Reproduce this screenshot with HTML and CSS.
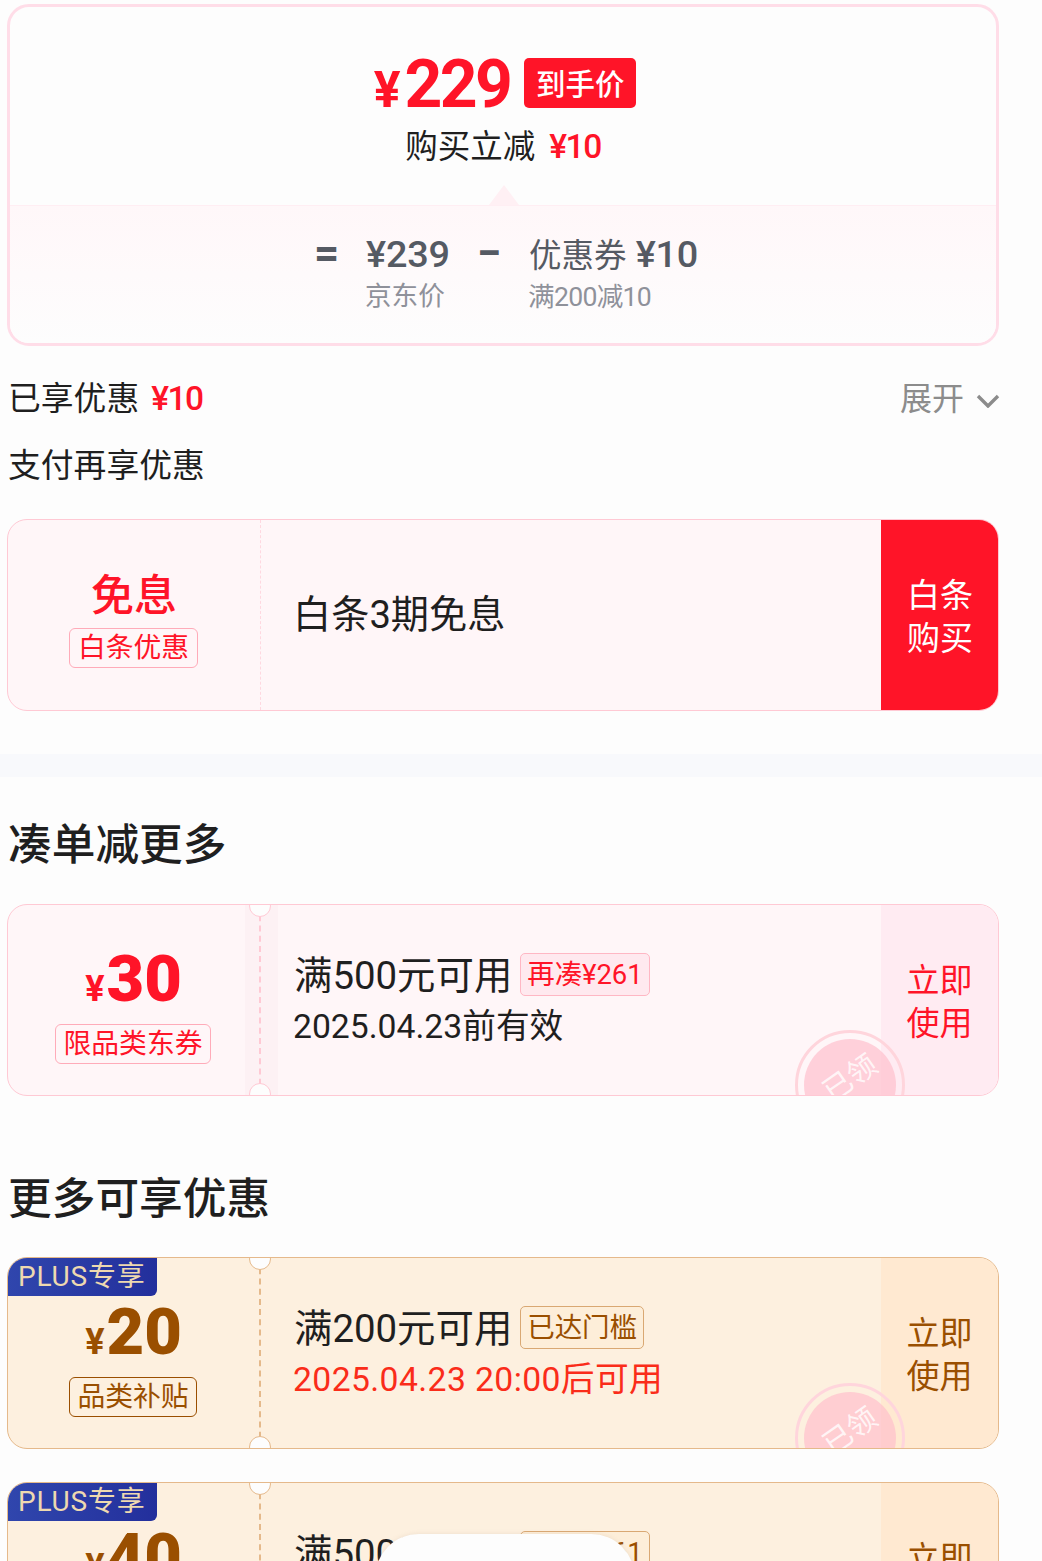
FILE: index.html
```html
<!DOCTYPE html>
<html lang="zh-CN">
<head>
<meta charset="utf-8">
<title>优惠明细</title>
<link rel="stylesheet" href="styles.css">
</head>
<body>
<main class="page">
  <section class="block">
    <div class="summary">
      <div class="summary-top">
        <div class="final">
          <span class="final-yen">¥</span><span class="final-num">229</span>
          <span class="final-tag">到手价</span>
        </div>
        <div class="final-sub">购买立减<span class="red-num">¥10</span></div>
        <i class="arrow"></i>
      </div>
      <div class="summary-bottom">
        <span class="op">=</span>
        <div class="term term-a"><b>¥239</b><small>京东价</small></div>
        <span class="op op-minus">−</span>
        <div class="term"><b><span class="cjk">优惠券</span> ¥10</b><small>满200减10</small></div>
      </div>
    </div>

    <div class="enjoyed">
      <div class="line-text">已享优惠<span class="red-num">¥10</span></div>
      <div class="expand">展开
        <svg class="chev" viewBox="0 0 24 14" width="24" height="14"><path d="M2 2l10 10L22 2" fill="none" stroke="#8c8c8c" stroke-width="3.4"/></svg>
      </div>
    </div>
    <div class="line-text pay-title">支付再享优惠</div>

    <article class="coupon pink baitiao">
      <div class="c-left">
        <div class="free">免息</div>
        <div class="c-tag">白条优惠</div>
      </div>
      <div class="c-mid"><div class="bt-title">白条3期免息</div></div>
      <div class="c-act solid">白条<br>购买</div>
    </article>
  </section>

  <div class="band"></div>

  <section class="block">
    <h2 class="head head-first">凑单减更多</h2>
    <article class="coupon pink ticket">
      <i class="strip"></i><i class="notch top"></i><i class="notch bot"></i>
      <div class="c-left">
        <div class="amount"><span class="yen">¥</span><span class="num">30</span></div>
        <div class="c-tag">限品类东券</div>
      </div>
      <div class="c-mid">
        <div class="rule">满500元可用<span class="rule-tag">再凑¥261</span></div>
        <div class="date">2025.04.23前有效</div>
      </div>
      <div class="c-act">立即<br>使用</div>
      <div class="stamp"><span>已领</span></div>
    </article>

    <h2 class="head head-second">更多可享优惠</h2>
    <article class="coupon gold ticket">
      <i class="notch top"></i><i class="notch bot"></i>
      <div class="plus">PLUS专享</div>
      <div class="c-left">
        <div class="amount"><span class="yen">¥</span><span class="num">20</span></div>
        <div class="c-tag">品类补贴</div>
      </div>
      <div class="c-mid">
        <div class="rule">满200元可用<span class="rule-tag">已达门槛</span></div>
        <div class="date date-red">2025.04.23 20:00后可用</div>
      </div>
      <div class="c-act">立即<br>使用</div>
      <div class="stamp"><span>已领</span></div>
    </article>

    <article class="coupon gold ticket last">
      <i class="notch top"></i><i class="notch bot"></i>
      <div class="plus">PLUS专享</div>
      <div class="c-left">
        <div class="amount"><span class="yen">¥</span><span class="num">40</span></div>
        <div class="c-tag">品类补贴</div>
      </div>
      <div class="c-mid">
        <div class="rule">满500元可用<span class="rule-tag">再凑¥261</span></div>
        <div class="date">2025.04.23前有效</div>
      </div>
      <div class="c-act">立即<br>使用</div>
    </article>
  </section>
  <div class="sheet"></div>
</main>
</body>
</html>
```

FILE: styles.css
```css
* { box-sizing: border-box; }
html, body { margin: 0; height: 1561px; overflow: hidden; background: #fdfdfd; }
body { font-family: Roboto, "Noto Sans CJK SC", sans-serif; color: #1f1f1f; }
.page { position: relative; height: 1561px; overflow: hidden; padding-top: 4px; }
.block { padding: 0 43px 0 7px; }

.summary { height: 342px; border: 3px solid #ffdde8; border-radius: 22px; overflow: hidden; background: #fdfdfd; display: flex; flex-direction: column; }
.summary-top { position: relative; height: 198px; display: flex; flex-direction: column; align-items: center; }
.final { display: flex; align-items: baseline; height: 60px; margin-top: 47px; color: #ff1428; line-height: 62px; font-weight: 700; margin-left: 4px; }
.final-yen { font-size: 50px; }
.final-num { font-size: 66px; letter-spacing: -2.6px; margin-left: 4px; }
.final-tag { align-self: center; margin-left: 14px; width: 112px; height: 50px; line-height: 54px; text-align: center; border-radius: 5px; background: #ff1428; color: #fff; font-size: 29.5px; font-weight: 500; letter-spacing: 0; position: relative; top: -1px; }
.final-sub { margin-top: 10px; height: 46px; line-height: 46px; font-size: 32.5px; display: flex; }
.red-num { margin-left: 14px; color: #ff1428; font-weight: 500; font-size: 33.5px; letter-spacing: -1.5px; }
.arrow { position: absolute; left: 479px; bottom: 0; width: 30px; height: 20px; background: #fff0f4; clip-path: polygon(50% 0, 100% 100%, 0 100%); }

.summary-bottom { flex: 1; border-top: 1px solid #ffeef3; background: linear-gradient(#fff7f9, #fdfdfd); display: flex; padding: 25px 0 0 304px; }
.op { font-size: 44px; line-height: 44px; font-weight: 700; color: #555a63; width: 52px; }
.op-minus { width: 52px; margin-left: 26px; }
.term { display: flex; flex-direction: column; }
.term-a { width: 85px; }
.term b { font-size: 37.8px; line-height: 46px; font-weight: 500; color: #555a63; white-space: nowrap; letter-spacing: -0.2px; }
.cjk { font-size: 32.5px; font-weight: 400; letter-spacing: 0; }
.term small { font-size: 26.6px; line-height: 36px; margin-left: -1px; color: #8f919a; white-space: nowrap; letter-spacing: -0.7px; }
.term-a small { letter-spacing: 0; margin-top: 1px; }

.enjoyed { display: flex; justify-content: space-between; align-items: center; margin: 30px 0 0 1px; height: 46px; }
.enjoyed .red-num { margin-left: 12px; }
.line-text { font-size: 32.8px; line-height: 46px; display: flex; }
.expand { font-size: 32px; color: #8c8c8c; display: flex; align-items: center; gap: 12px; padding-bottom: 6px; }
.chev { margin-top: 10px; margin-right: -1px; }
.pay-title { margin: 21px 0 0 1px; }

.coupon { position: relative; display: flex; width: 992px; height: 192px; border: 1px solid #ffc9d4; border-radius: 20px; overflow: hidden; background: #fff6f8; }
.baitiao { margin-top: 30px; }
.c-left { position: relative; width: 253px; flex: none; display: flex; flex-direction: column; align-items: center; }
.baitiao .c-left { border-right: 1px dashed #ffd8e0; justify-content: flex-start; }
.free { margin-top: 47px; height: 58px; line-height: 58px; font-size: 43px; font-weight: 500; color: #ff1428; }
.c-tag { height: 40px; line-height: 38px; padding: 0 7.5px; margin-right: 1px; border: 1px solid #ffabb9; border-radius: 6px; font-size: 27.8px; color: #ff1428; white-space: nowrap; background: #fff6f8; }
.baitiao .c-tag { margin-top: 3px; }
.c-mid { flex: 1; min-width: 0; padding-left: 34px; position: relative; }
.baitiao .c-mid { padding-left: 32px; }
.bt-title { font-size: 38.2px; line-height: 54px; margin-top: 68px; white-space: nowrap; }
.c-act { width: 117px; flex: none; display: flex; align-items: center; justify-content: center; text-align: center; font-size: 33px; line-height: 43px; padding-top: 4px; background: #ffebf2; color: #ff1428; }
.c-act.solid { background: #ff1428; color: #fff; margin: -1px -1px -1px 0; width: 118px; height: 192px; }

.band { height: 23px; margin-top: 43px; background: #f8f9fc; }

.head { margin: 0 0 0 1px; font-size: 43.7px; line-height: 60px; font-weight: 500; white-space: nowrap; }
.head-first { margin-top: 38px; }
.head-second { margin-top: 73px; margin-bottom: -1px; }

.ticket { margin-top: 29px; }
.ticket.last { margin-top: 33px; }
.ticket .c-left { border-right: 2px dashed #ffc9d4; }
.strip { position: absolute; left: 237px; top: 0; bottom: 0; width: 33px; background: #fdf1f4; }
.notch { position: absolute; left: 241px; width: 22px; height: 22px; border-radius: 50%; background: #fdfdfd; border: 1px solid #ffc9d4; z-index: 2; }
.notch.top { top: -10px; }
.notch.bot { bottom: -10px; }
.amount { position: relative; display: flex; align-items: baseline; height: 66px; margin-top: 41px; line-height: 66px; font-weight: 900; color: #ff1428; }
.yen { font-size: 36px; margin-right: 2px; font-weight: 700; }
.num { font-size: 65px; }
.ticket .c-tag { margin-top: 12px; }
.rule { display: flex; align-items: center; height: 46px; margin-top: 44px; font-size: 38.4px; white-space: nowrap; margin-left: -1px; }
.rule-tag { height: 43px; line-height: 41px; margin: 4px 0 0 8px; padding: 0 6px; border: 1px solid #ffb7c4; border-radius: 5px; background: #ffe9ef; color: #ff1428; font-size: 27.5px; letter-spacing: -0.1px; }
.date { margin-top: 10px; line-height: 44px; font-size: 33.7px; white-space: nowrap; margin-left: -2px; }
.date-red { color: #fa2c19; letter-spacing: 0.4px; }
.stamp { position: absolute; left: 787px; top: 125px; width: 110px; height: 110px; border: 3px solid #ffd5dc; border-radius: 50%; padding: 6px; z-index: 1; background: rgba(255, 190, 204, 0.68); background-clip: content-box; }
.stamp span { display: flex; align-items: center; justify-content: center; width: 100%; height: 100%; color: rgba(255, 255, 255, 0.8); font-size: 29px; line-height: 44px; transform: translate(0, -7px) rotate(-35deg); }

.gold { background: #fdf0df; border-color: #e5b98b; }
.gold .c-left { border-right-color: #e5b98b; }
.gold .notch { border-color: #e5b98b; }
.gold .amount, .gold .c-tag, .gold .c-act, .gold .rule-tag { color: #9a4f00; }
.gold .c-tag { border-color: #9a4f00; background: transparent; }
.gold .c-act { background: #ffe9d1; }
.gold .rule-tag { background: #fdeed9; border-color: #d9a873; }
.plus { position: absolute; left: -1px; top: -1px; width: 150px; height: 39px; line-height: 40px; padding-left: 11px; border-radius: 0 0 6px 0; background: linear-gradient(90deg, #3046ad, #232f9c); color: #eed9b0; font-size: 28px; letter-spacing: 0.8px; z-index: 2; white-space: nowrap; }

.sheet { position: absolute; left: 375px; top: 1534px; width: 260px; height: 60px; border-radius: 44px 44px 0 0; background: #fdfdfd; box-shadow: 0 0 4px rgba(190, 170, 150, 0.25); z-index: 3; }
```
